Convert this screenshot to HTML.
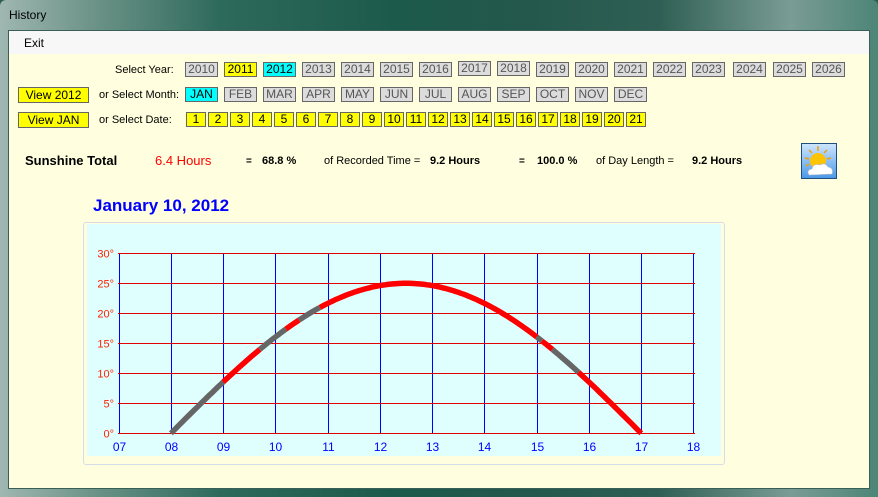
<!DOCTYPE html>
<html><head><meta charset="utf-8"><style>
*{margin:0;padding:0;box-sizing:border-box}
body{width:878px;height:497px;overflow:hidden;position:relative;font-family:"Liberation Sans",sans-serif;background:#2a5e52}
#frame{position:absolute;left:0;top:0;width:878px;height:497px;border-radius:6px 6px 0 0;background:linear-gradient(90deg,#9fb7b0 0%,#6f958a 10%,#2e6a5c 25%,#1c5a4b 45%,#24584c 60%,#2f5f54 75%,#7a9c94 90%,#4d8577 100%)}
#title{position:absolute;left:9px;top:8px;font-size:12px;color:#000}
#client{position:absolute;left:8px;top:30px;width:862px;height:459px;background:#ffffdf;border:1px solid #3a5f56}
#menu{position:absolute;left:0;top:0;width:100%;height:23px;background:#f7f7f7;font-size:12px}
#menu span{position:absolute;left:15px;top:5px}
.b{position:absolute;height:15px;border:1px solid #666;background:#dcdcdc;color:#555;font-size:12px;line-height:13px;text-align:center}
.y{background:#ffff00;color:#000}
.c{background:#00ffff;color:#000}
.d{position:absolute;top:112px;width:20px;height:15px;border:1px solid #666;background:#ffff00;font-size:12px;line-height:13px;text-align:center}
.l{position:absolute;font-size:11px;color:#000}
.s{position:absolute;top:154px;font-weight:bold;font-size:11px;color:#000}
</style></head><body>
<div id="frame"></div>
<div id="title">History</div>
<div id="client"><div id="menu"><span>Exit</span></div></div>
<div style="position:absolute;left:0;top:0;width:878px;height:497px">
<div class="l" style="left:115px;top:64px">Select Year:</div>
<div class="l" style="left:99px;top:89px">or Select Month:</div>
<div class="l" style="left:99px;top:114px">or Select Date:</div>
<div class="b y" style="left:18px;top:87px;width:71px;height:16px;line-height:14px">View 2012</div>
<div class="b y" style="left:18px;top:112px;width:71px;height:16px;line-height:14px">View JAN</div>
<div id="yrs"></div><div id="mos"></div><div id="dts"></div>
<div class="s" style="left:25px;top:153px;font-size:13px">Sunshine Total</div>
<div class="s" style="left:155px;top:153px;font-size:13px;color:#f00;font-weight:normal">6.4 Hours</div>
<div class="s" style="left:246px;top:156px;font-size:10px">=</div>
<div class="s" style="left:262px;top:155px">68.8 %</div>
<div class="s" style="left:324px;top:155px;font-weight:normal">of Recorded Time =</div>
<div class="s" style="left:430px;top:155px">9.2 Hours</div>
<div class="s" style="left:519px;top:156px;font-size:10px">=</div>
<div class="s" style="left:537px;top:155px">100.0 %</div>
<div class="s" style="left:596px;top:155px;font-weight:normal">of Day Length =</div>
<div class="s" style="left:692px;top:155px">9.2 Hours</div>
<svg style="position:absolute;left:801px;top:143px" width="36" height="36" viewBox="0 0 36 36">
<defs><linearGradient id="g" x1="0" y1="0" x2="0" y2="1"><stop offset="0" stop-color="#cfe6ff"/><stop offset="1" stop-color="#4a98e8"/></linearGradient></defs>
<rect x="0.5" y="0.5" width="35" height="35" fill="url(#g)" stroke="#1f4f7f"/>
<g stroke="#f0a000" stroke-width="1.5"><line x1="17" y1="3" x2="17" y2="8"/><line x1="8" y1="7" x2="11" y2="10"/><line x1="26" y1="7" x2="23" y2="10"/><line x1="4" y1="15" x2="8" y2="16"/><line x1="30" y1="15" x2="26" y2="16"/><line x1="5" y1="23" x2="8" y2="21"/></g>
<circle cx="17" cy="18" r="8" fill="#ffc400"/>
<path d="M8 32 Q5 27 11 26 Q12 20 19 22 Q24 19 27 24 Q33 25 31 31 Z" fill="#fff" stroke="#bbb" stroke-width=".6"/>
</svg>
<div style="position:absolute;left:93px;top:196px;font-size:17px;font-weight:bold;color:#0000ff">January 10, 2012</div>
<div style="position:absolute;left:83px;top:222px;width:642px;height:243px;border:1px solid #d4dce6;border-radius:3px"></div>
<div style="position:absolute;left:87px;top:224px;width:634px;height:232px;background:#dfffff"></div>
<svg id="ch" style="position:absolute;left:0;top:0" width="878" height="497"></svg>
</div>
<script>
function mk(id,arr,x0,dx,w,top,cls){var h='';arr.forEach(function(t,i){var c=cls(i);h+='<div class="'+(id=='dts'?'d':'b')+' '+c+'" style="left:'+(x0[i]!==undefined?x0[i]:0)+'px;top:'+top(i)+'px;width:'+w+'px">'+t+'</div>';});document.getElementById(id).innerHTML=h;}
var yx=[185,224,263,302,341,380,419,458,497,536,575,614,653,692,733,773,812],ya=[];for(var i=2010;i<=2026;i++)ya.push(i);
mk('yrs',ya,yx,0,33,function(i){return (i==7||i==8)?61:62},function(i){return i==1?'y':i==2?'c':''});
var mx=[],ma=['JAN','FEB','MAR','APR','MAY','JUN','JUL','AUG','SEP','OCT','NOV','DEC'];for(i=0;i<12;i++)mx.push(185+i*39);
mk('mos',ma,mx,0,33,function(){return 87},function(i){return i==0?'c':''});
var dx=[],da=[];for(i=0;i<21;i++){dx.push(186+i*22);da.push(i+1);}
mk('dts',da,dx,0,20,function(){return 112},function(i){return i==9?'c':''});
var s='';var X=function(t){return 118.7+(t-7)*52.25},Y=function(a){return 433.3-a*6};
for(i=0;i<=11;i++){var x=(Math.round(X(7+i))+0.5).toFixed(1);s+='<line x1="'+x+'" y1="253" x2="'+x+'" y2="433" stroke="#0000ff" stroke-width="1.3" shape-rendering="crispEdges"/>';s+='<text x="'+x+'" y="451" font-size="12" fill="#0000ff" text-anchor="middle" font-family="Liberation Sans">'+('0'+(7+i)).slice(-2)+'</text>';}
for(i=0;i<=6;i++){var y=(Math.round(Y(i*5))+0.5).toFixed(1);s+='<line x1="118" y1="'+y+'" x2="695" y2="'+y+'" stroke="#e00000" stroke-width="1.3" shape-rendering="crispEdges"/>';s+='<text x="114" y="'+(+y+4)+'" font-size="11" fill="#ff2000" text-anchor="end" font-family="Liberation Sans">'+(i*5)+'°</text>';}
var segs=[[8,9,'#666'],[9,9.7,'#f00'],[9.7,10.2,'#666'],[10.2,10.45,'#f00'],[10.45,10.85,'#666'],[10.85,15.0,'#f00'],[15.0,15.1,'#666'],[15.1,15.3,'#f00'],[15.3,15.8,'#666'],[15.8,17,'#f00']];
segs.forEach(function(g){var p='';for(var t=g[0];t<=g[1]+1e-6;t+=0.05){p+=X(t).toFixed(1)+','+Y(25*Math.sin(Math.PI*(t-8)/9)).toFixed(1)+' ';}s+='<polyline points="'+p+'" fill="none" stroke="'+g[2]+'" stroke-width="5.5"/>';});
document.getElementById('ch').innerHTML=s;
</script>
</body></html>
